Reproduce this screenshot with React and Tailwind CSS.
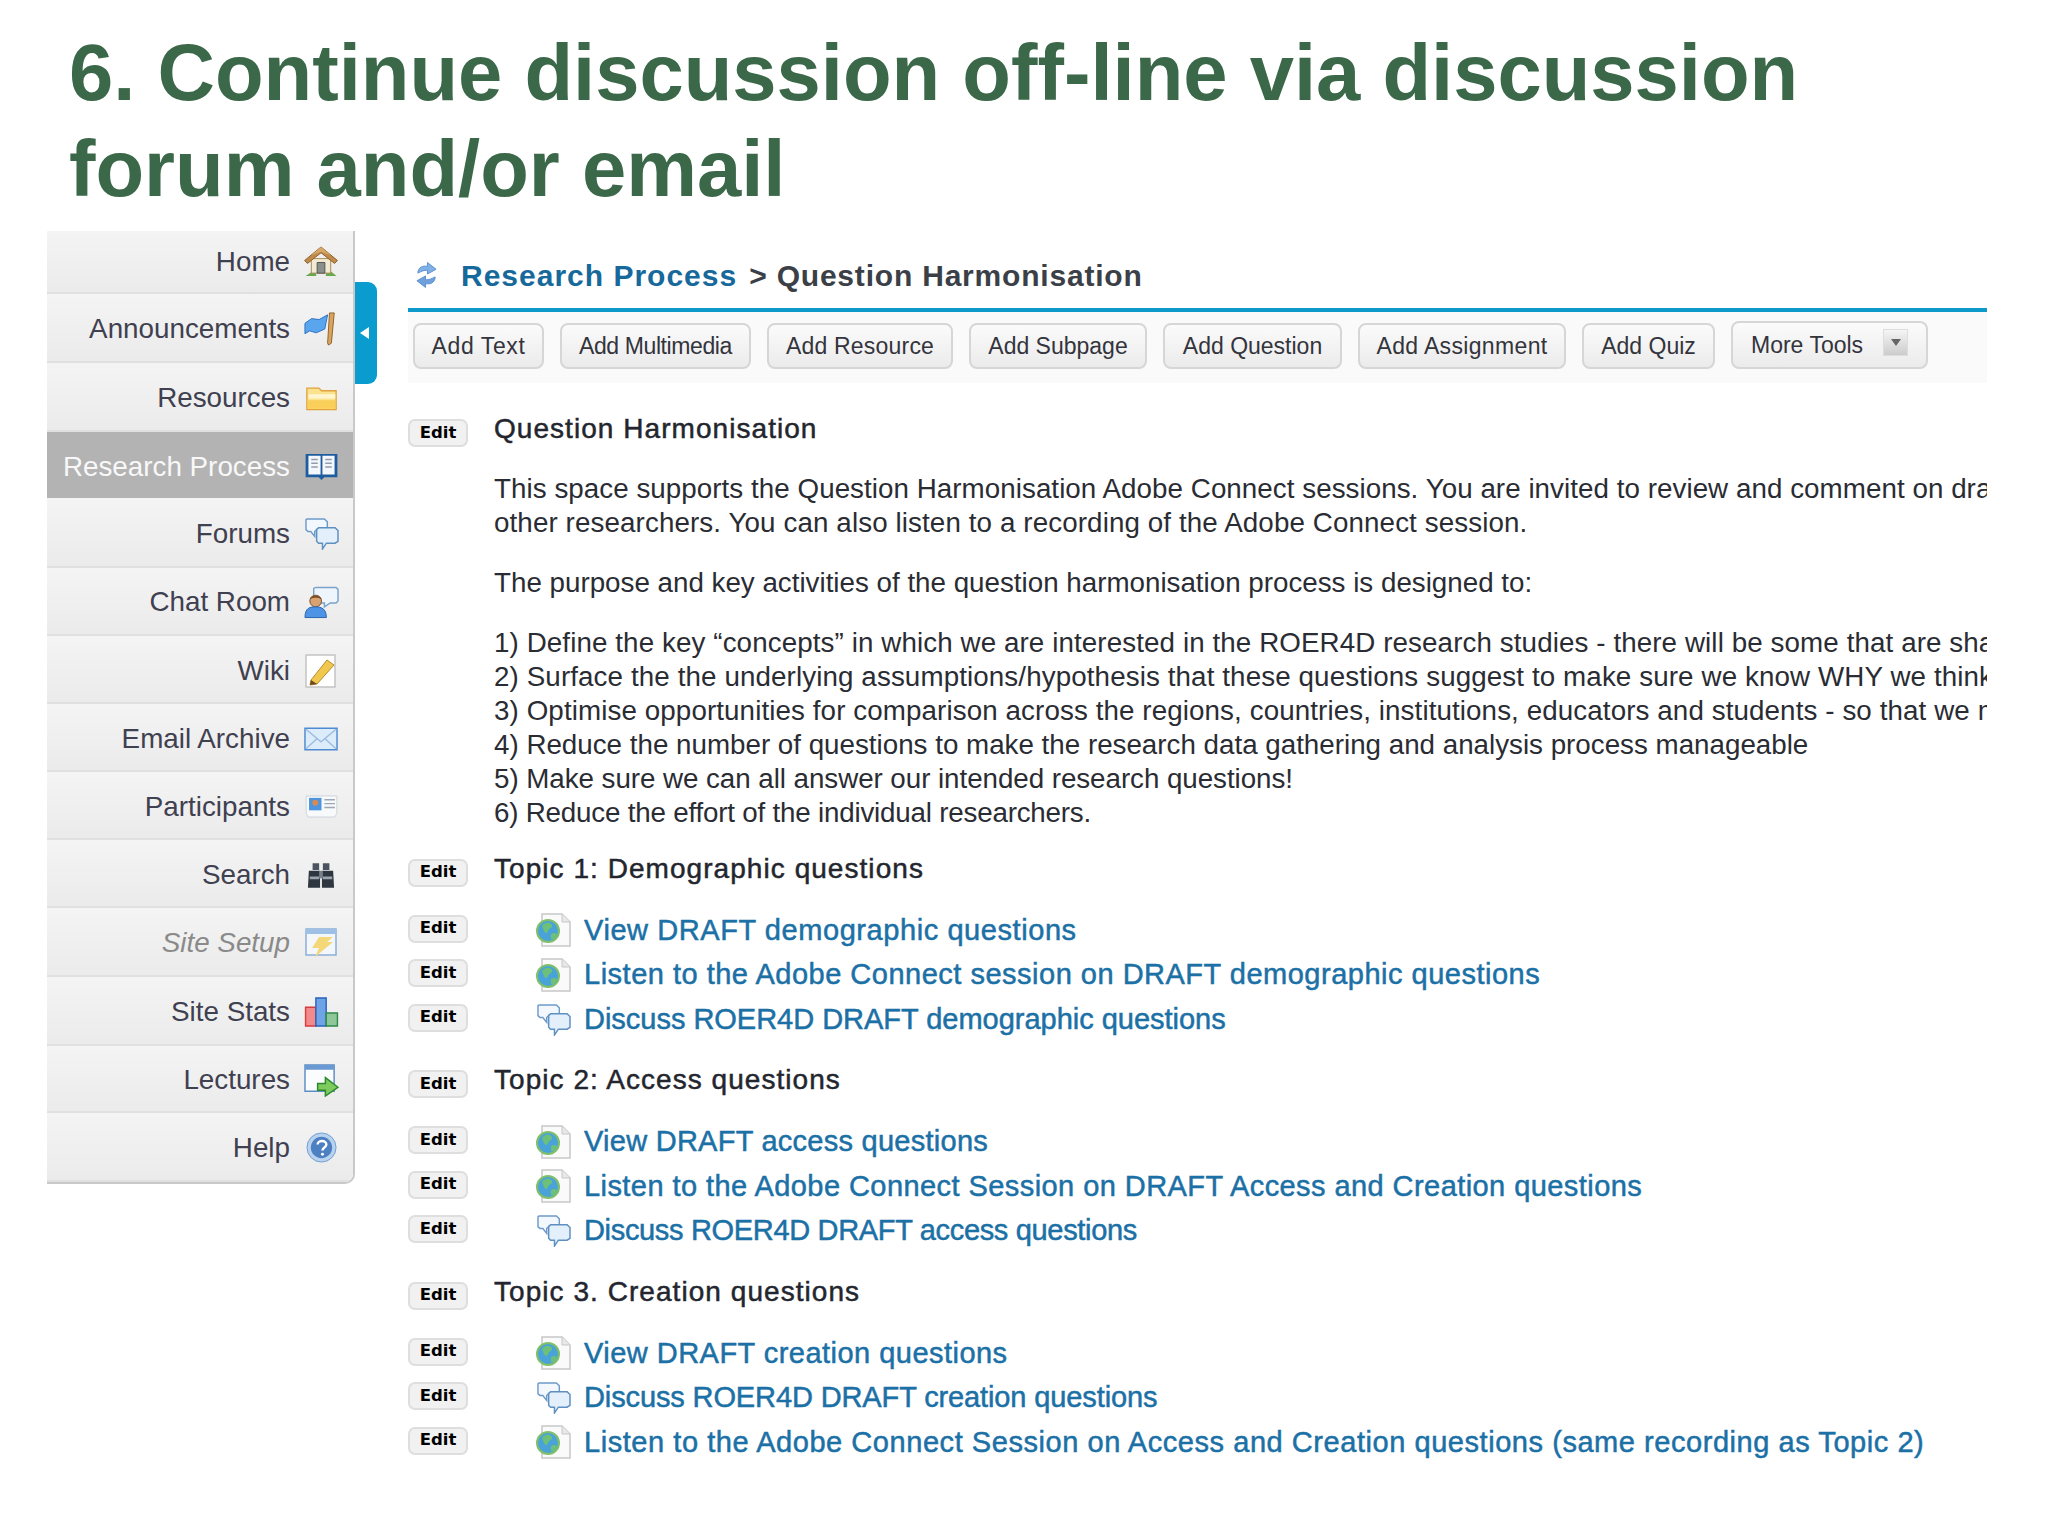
const Home = () => (
  <svg viewBox="0 0 36 32" className="w-[36px] h-[31px]">
    <path d="M2 31h11v-4H8zM23 27v4h11l-6-5z" fill="#6aa84f" />
    <path d="M8 13h20v15H8z" fill="#f3ead2" stroke="#a78a55" />
    <path d="M14 17h8v11h-8z" fill="#8a8f8c" stroke="#555" />
    <path d="M18 1 1 15l3 3L18 7l14 11 3-3z" fill="#c08a4a" stroke="#8d5f2a" />
    <path d="M18 1 8 9.500 18 6l10 3.500z" fill="#d7a768" />
  </svg>
);
const Flag = () => (
  <svg viewBox="0 0 36 36" className="w-[34px] h-[36px]">
    <path d="M1 12 8 7l8 1 9-5-3 15-9 4-7-2-5 3z" fill="#5aa6ee" stroke="#2a6fc0" />
    <path d="M27 1h5l-3 32-3 2-1-2z" fill="#d9a45b" stroke="#8d5f2a" />
  </svg>
);
const Folder = () => (
  <svg viewBox="0 0 36 28" className="w-[31px] h-[25px]">
    <path d="M1 2h14l3 3h17v22H1z" fill="#fbe38e" stroke="#e0a23a" strokeWidth="1.5" />
    <path d="M3 9h31v5H3z" fill="#fff6cf" />
    <path d="M2 16h32v10H2z" fill="#f9cf5a" />
  </svg>
);
const Book = () => (
  <svg viewBox="0 0 36 30" className="w-[35px] h-[28px]">
    <path d="M1 1h34v25H21l-3 3-3-3H1z" fill="#1d5c9e" />
    <path d="M4 3h13v20H4zM19 3h13v20H19z" fill="#f4f7fb" />
    <path d="M7 7h7M7 11h7M7 15h7M22 7h7M22 11h7M22 15h7" stroke="#8f9db0" strokeWidth="1.5" />
  </svg>
);
const Chat = ({ className = "w-[35px] h-[33px]" }) => (
  <svg viewBox="0 0 36 34" className={className}>
    <path d="M3 2h18l3 3v7H14l-3 3v5l-4-5H4l-2-2V3z" fill="#f2f8fe" stroke="#6d9bc9" strokeWidth="1.5" />
    <path d="M15 11h17l3 3v11l-3 2h-9l-4 6v-6h-4l-2-2V13z" fill="#e3f0fc" stroke="#5d8fc0" strokeWidth="1.5" />
  </svg>
);
const Person = () => (
  <svg viewBox="0 0 36 34" className="w-[35px] h-[34px]">
    <path d="M12 2h21l2 2v12l-2 2h-6l-6 4v-4h-9l-2-2V3z" fill="#eef5fc" stroke="#7aa3cc" strokeWidth="1.5" />
    <circle cx="12" cy="16" r="6" fill="#d9a273" stroke="#7c4f28" />
    <path d="M6 14c1-5 11-5 12 0-4-2-8-2-12 0z" fill="#7c4f28" />
    <path d="M1 33c0-10 5-11 11-11s11 2 11 11z" fill="#4d94e6" stroke="#2a64ad" />
  </svg>
);
const Pencil = () => (
  <svg viewBox="0 0 32 34" className="w-[32px] h-[34px]">
    <path d="M1 1h29v32H1z" fill="#fff" stroke="#c4c4c4" strokeWidth="1.5" />
    <path d="M6 26 22 6l7 5-17 19-7 1z" fill="#f1c84e" stroke="#b88a2c" />
    <path d="M6 26l-1 5 7-1z" fill="#6d4a20" />
  </svg>
);
const Mail = () => (
  <svg viewBox="0 0 35 24" className="w-[34px] h-[24px]">
    <path d="M1 1h33v22H1z" fill="#dcecfb" stroke="#4d8ad0" strokeWidth="1.5" />
    <path d="M2 2l15.500 13L33 2M2 22l11-10M33 22 22 12" fill="none" stroke="#9dbde0" strokeWidth="1.5" />
  </svg>
);
const Card = () => (
  <svg viewBox="0 0 34 24" className="w-[33px] h-[23px]">
    <path d="M1 1h32v18l-2 4H3l-2-4z" fill="#f7f9fb" stroke="#ccd3da" />
    <path d="M4 3h13v13H4z" fill="#4f95dd" />
    <circle cx="10.500" cy="8" r="3" fill="#d98b4f" />
    <path d="M20 5h11M20 9h11M20 13h11" stroke="#9aa8b5" strokeWidth="1.5" />
  </svg>
);
const Binoculars = () => (
  <svg viewBox="0 0 30 28" className="w-[28px] h-[27px]">
    <path d="M6 1h7v7H6zM17 1h7v7h-7z" fill="#4b5560" />
    <path d="M2 9h12v18H1zM16 9h12l1 18H16z" fill="#2e3640" />
    <path d="M13 9h4v8h-4z" fill="#77818c" />
    <path d="M3 15h10v3H3zM17 15h10v3H17z" fill="#9aa4ae" />
  </svg>
);
const WindowBolt = () => (
  <svg viewBox="0 0 32 30" className="w-[32px] h-[30px]">
    <path d="M1 1h30v26H1z" fill="#f3f7fb" stroke="#8dafd6" strokeWidth="1.5" />
    <path d="M1 1h30v5H1z" fill="#9fc0e6" />
    <path d="M14 9h14l-6 5h6L10 29l4-9H7z" fill="#f4d877" />
  </svg>
);
const Bars = () => (
  <svg viewBox="0 0 36 32" className="w-[35px] h-[30px]">
    <path d="M1 11h11v20H1z" fill="#f3898b" stroke="#d83b3e" strokeWidth="1.5" />
    <path d="M12 1h11v30H12z" fill="#6ea3e6" stroke="#2a63bd" strokeWidth="1.5" />
    <path d="M23 17h12v14H23z" fill="#8fc79a" stroke="#2f8a45" strokeWidth="1.5" />
  </svg>
);
const WindowArrow = () => (
  <svg viewBox="0 0 36 34" className="w-[35px] h-[33px]">
    <path d="M1 1h30v27H1z" fill="#fbfcfe" stroke="#5d8cc4" strokeWidth="1.5" />
    <path d="M1 1h30v5H1z" fill="#6b9ad2" />
    <path d="M14 20h8v-6l13 10-13 9v-6h-8z" fill="#7ccb5c" stroke="#2c8a2c" strokeWidth="1.5" />
  </svg>
);
const Help = () => (
  <svg viewBox="0 0 32 32" className="w-[31px] h-[31px]">
    <circle cx="16" cy="16" r="15" fill="#b9d2ee" stroke="#6f9ed2" />
    <circle cx="16" cy="16" r="11" fill="#4d80c2" />
    <path d="M12 13c0-5 9-5 9 0 0 3-4 3-4 6" fill="none" stroke="#fff" strokeWidth="2.500" />
    <circle cx="17" cy="23" r="1.500" fill="#fff" />
  </svg>
);
const Globe = () => (
  <svg viewBox="0 0 35 34" className="w-[35px] h-[34px]">
    <path d="M6 1h20l8 8v24H6z" fill="#fafafa" stroke="#c7c7c7" strokeWidth="1.5" />
    <path d="M26 1v8h8" fill="#e8e8e8" stroke="#c7c7c7" />
    <circle cx="12" cy="18" r="11" fill="#4aa3d8" stroke="#7fbf6a" strokeWidth="2" />
    <path d="M6 13c3-4 8-4 10-1 1 3-3 3-4 6-1 3-3 2-4 0zM15 21c3-2 6-1 6 1-1 3-4 5-6 4z" fill="#6cc07a" />
  </svg>
);
const Refresh = () => (
  <svg viewBox="0 0 24 28" className="w-[23px] h-[28px]">
    <path d="M3 12c0-6 5-8 10-7V1l9 7-9 5V9c-4 0-6 1-10 3z" fill="#7fb0e6" stroke="#5a8fd0" />
    <path d="M21 16c0 6-5 8-10 7v4l-9-7 9-5v4c4 0 6-1 10-3z" fill="#6fa0dc" stroke="#5a8fd0" />
  </svg>
);

const nav = [
  ["Home", <Home />, "h-[63px]"],
  ["Announcements", <Flag />, "h-[69px] pt-[3px]"],
  ["Resources", <Folder />, "h-[69px] pt-[3px]"],
  ["Research Process", <Book />, "h-[66px] pt-[3px]", "active"],
  ["Forums", <Chat />, "h-[70px] pt-[3px]"],
  ["Chat Room", <Person />, "h-[68px] pt-[2px]"],
  ["Wiki", <Pencil />, "h-[68px] pt-[3px]"],
  ["Email Archive", <Mail />, "h-[68px] pt-[3px]"],
  ["Participants", <Card />, "h-[68px] pt-[3px]"],
  ["Search", <Binoculars />, "h-[68px] pt-[4px]"],
  ["Site Setup", <WindowBolt />, "h-[69px] pt-[3px]", "muted"],
  ["Site Stats", <Bars />, "h-[69px] pt-[2px]"],
  ["Lectures", <WindowArrow />, "h-[67px] pt-[3px]"],
  ["Help", <Help />, "h-[69px] pt-[2px]"],
];

const NavItem = ({ item }) => {
  const [label, icon, h, kind] = item;
  const bg =
    kind === "active"
      ? "bg-[#b3b3b3] text-[#f8f8f8]"
      : kind === "muted"
        ? "bg-gradient-to-b from-[#f4f4f4] to-[#ebebeb] text-[#8a8a8a] italic border-b-2 border-[#e0e0e0]"
        : "bg-gradient-to-b from-[#f4f4f4] to-[#ebebeb] text-[#3f4050] border-b-2 border-[#e0e0e0]";
  return (
    <div className={`${h} ${bg} flex items-center justify-end pr-[14px] gap-[13px] text-[27.8px]`}>
      <span>{label}</span>
      <span className="w-[36px] flex justify-center items-center">{icon}</span>
    </div>
  );
};

const tools = [
  ["Add Text", "w-[131px] tracking-[0.6px]"],
  ["Add Multimedia", "w-[191px] tracking-[-0.4px]"],
  ["Add Resource", "w-[186px] tracking-[0.2px]"],
  ["Add Subpage", "w-[178px]"],
  ["Add Question", "w-[179px]"],
  ["Add Assignment", "w-[208px] tracking-[0.35px]"],
  ["Add Quiz", "w-[133px]"],
];

const Edit = ({ className = "" }) => (
  <span className={`w-[60px] h-[28px] shrink-0 rounded-[7px] border-2 border-[#dedede] bg-[#f1f1f1] text-black font-bold text-[16.5px] flex items-center justify-center font-['DejaVu_Sans',sans-serif] ${className}`}>
    Edit
  </span>
);

const Heading = ({ children, className = "" }) => (
  <div className={`flex items-start gap-[26px] ${className}`}>
    <Edit className="mt-[7px]" />
    <div className="h-[34px] leading-[34px] text-[28px] tracking-[1.05px] text-[#23262e] [-webkit-text-stroke:0.5px_#23262e]">{children}</div>
  </div>
);

const LinkRow = ({ icon, track, children }) => (
  <div className="h-[44.5px] flex items-center">
    <Edit className="mb-[3px]" />
    <span className="ml-[68px] w-[35px] flex justify-center">{icon}</span>
    <a className={`ml-[13px] text-[29px] ${track} text-[#1b70a6] [-webkit-text-stroke:0.5px_#1b70a6]`}>{children}</a>
  </div>
);

const Section = ({ title, links }) => (
  <div className="mt-[21.5px]">
    <Heading>{title}</Heading>
    <div className="mt-[21.5px]">
      {links.map(([kind, text, track]) => (
        <LinkRow key={text} track={track} icon={kind === "g" ? <Globe /> : <Chat />}>
          {text}
        </LinkRow>
      ))}
    </div>
  </div>
);

const Line = ({ track = "", children }) => <span className={`block ${track}`}>{children}</span>;

export default function App() {
  return (
    <div className="w-[2048px] h-[1536px] bg-white overflow-hidden font-['Liberation_Sans',Arial,sans-serif]">
      <h1 className="pl-[69px] pt-[25px] mb-[14px] text-[79.6px] leading-[96px] font-bold text-[#3b6849]">
        6. Continue discussion off-line via discussion
        <br />
        forum and/or email
      </h1>
      <div className="flex items-start">
        <div className="ml-[47px] w-[308px] shrink-0 border-r-2 border-b-2 border-[#c9c9c9] rounded-br-[10px] overflow-hidden">
          {nav.map((n) => (
            <NavItem key={n[0]} item={n} />
          ))}
        </div>
        <div className="mt-[51px] w-[22px] h-[102px] shrink-0 bg-[#0a9ccf] rounded-r-[9px] flex items-center pl-[5px]">
          <span className="w-0 h-0 border-y-[6px] border-y-transparent border-r-[9px] border-r-white" />
        </div>
        <div className="ml-[31px] w-[1579px] shrink-0 overflow-hidden whitespace-nowrap">
          <div className="h-[77px] pt-[11px] flex items-center">
            <span className="ml-[7px] w-[23px] flex">
              <Refresh />
            </span>
            <span className="ml-[23px] text-[30px] font-bold tracking-[1px] text-[#17699c]">Research Process</span>
            <span className="ml-[12px] text-[30px] font-bold tracking-[0.8px] text-[#3b3f47]">&gt; Question Harmonisation</span>
          </div>
          <div className="h-[4px] bg-[#0d99c9]" />
          <div className="h-[71px] bg-[#fafafa] flex items-end gap-[16px] pl-[5px] pb-[14px]">
            {tools.map(([t, w]) => (
              <span key={t} className={`${w} h-[46px] flex items-center justify-center text-[23px] text-[#33343c] rounded-[8px] border-2 border-[#d6d6d6] bg-gradient-to-b from-[#fbfbfb] to-[#ebebeb]`}>
                {t}
              </span>
            ))}
            <span className="h-[48px] w-[197px] pl-[18px] flex items-center text-[23px] text-[#33343c] rounded-[8px] border-2 border-[#d6d6d6] bg-gradient-to-b from-[#fbfbfb] to-[#ebebeb]">
              More Tools
              <span className="ml-[20px] w-[25px] h-[27px] mb-[6px] border border-[#dddddd] bg-gradient-to-b from-[#f5f5f5] to-[#cccccc] flex justify-center pt-[9px]">
                <span className="w-0 h-0 border-x-[5px] border-x-transparent border-t-[7px] border-t-[#666666]" />
              </span>
            </span>
          </div>

          <Heading className="mt-[29px]">Question Harmonisation</Heading>
          <div className="ml-[86px] text-[27.75px] leading-[34px] text-[#2a2c33]">
            <div className="mt-[25px]">
              <Line track="tracking-[0.05px]">This space supports the Question Harmonisation Adobe Connect sessions. You are invited to review and comment on draft questions</Line>
              <Line track="tracking-[0.11px]">other researchers. You can also listen to a recording of the Adobe Connect session.</Line>
            </div>
            <div className="mt-[26px]">The purpose and key activities of the question harmonisation process is designed to:</div>
            <div className="mt-[26px]">
              <Line track="tracking-[0.1px]">1) Define the key “concepts” in which we are interested in the ROER4D research studies - there will be some that are shared</Line>
              <Line track="tracking-[0.11px]">2) Surface the the underlying assumptions/hypothesis that these questions suggest to make sure we know WHY we think</Line>
              <Line track="tracking-[0.1px]">3) Optimise opportunities for comparison across the regions, countries, institutions, educators and students - so that we may</Line>
              <Line>4) Reduce the number of questions to make the research data gathering and analysis process manageable</Line>
              <Line track="tracking-[-0.05px]">5) Make sure we can all answer our intended research questions!</Line>
              <Line track="tracking-[-0.2px]">6) Reduce the effort of the individual researchers.</Line>
            </div>
          </div>

          <Section
            title="Topic 1: Demographic questions"
            links={[
              ["g", "View DRAFT demographic questions", "tracking-[0.57px]"],
              ["g", "Listen to the Adobe Connect session on DRAFT demographic questions", "tracking-[0.5px]"],
              ["c", "Discuss ROER4D DRAFT demographic questions", "tracking-[-0.02px]"],
            ]}
          />
          <Section
            title="Topic 2: Access questions"
            links={[
              ["g", "View DRAFT access questions", "tracking-[0.26px]"],
              ["g", "Listen to the Adobe Connect Session on DRAFT Access and Creation questions", "tracking-[0.43px]"],
              ["c", "Discuss ROER4D DRAFT access questions", "tracking-[-0.33px]"],
            ]}
          />
          <Section
            title="Topic 3. Creation questions"
            links={[
              ["g", "View DRAFT creation questions", "tracking-[0.47px]"],
              ["c", "Discuss ROER4D DRAFT creation questions", "tracking-[-0.12px]"],
              ["g", "Listen to the Adobe Connect Session on Access and Creation questions (same recording as Topic 2)", "tracking-[0.55px]"],
            ]}
          />
        </div>
      </div>
    </div>
  );
}
